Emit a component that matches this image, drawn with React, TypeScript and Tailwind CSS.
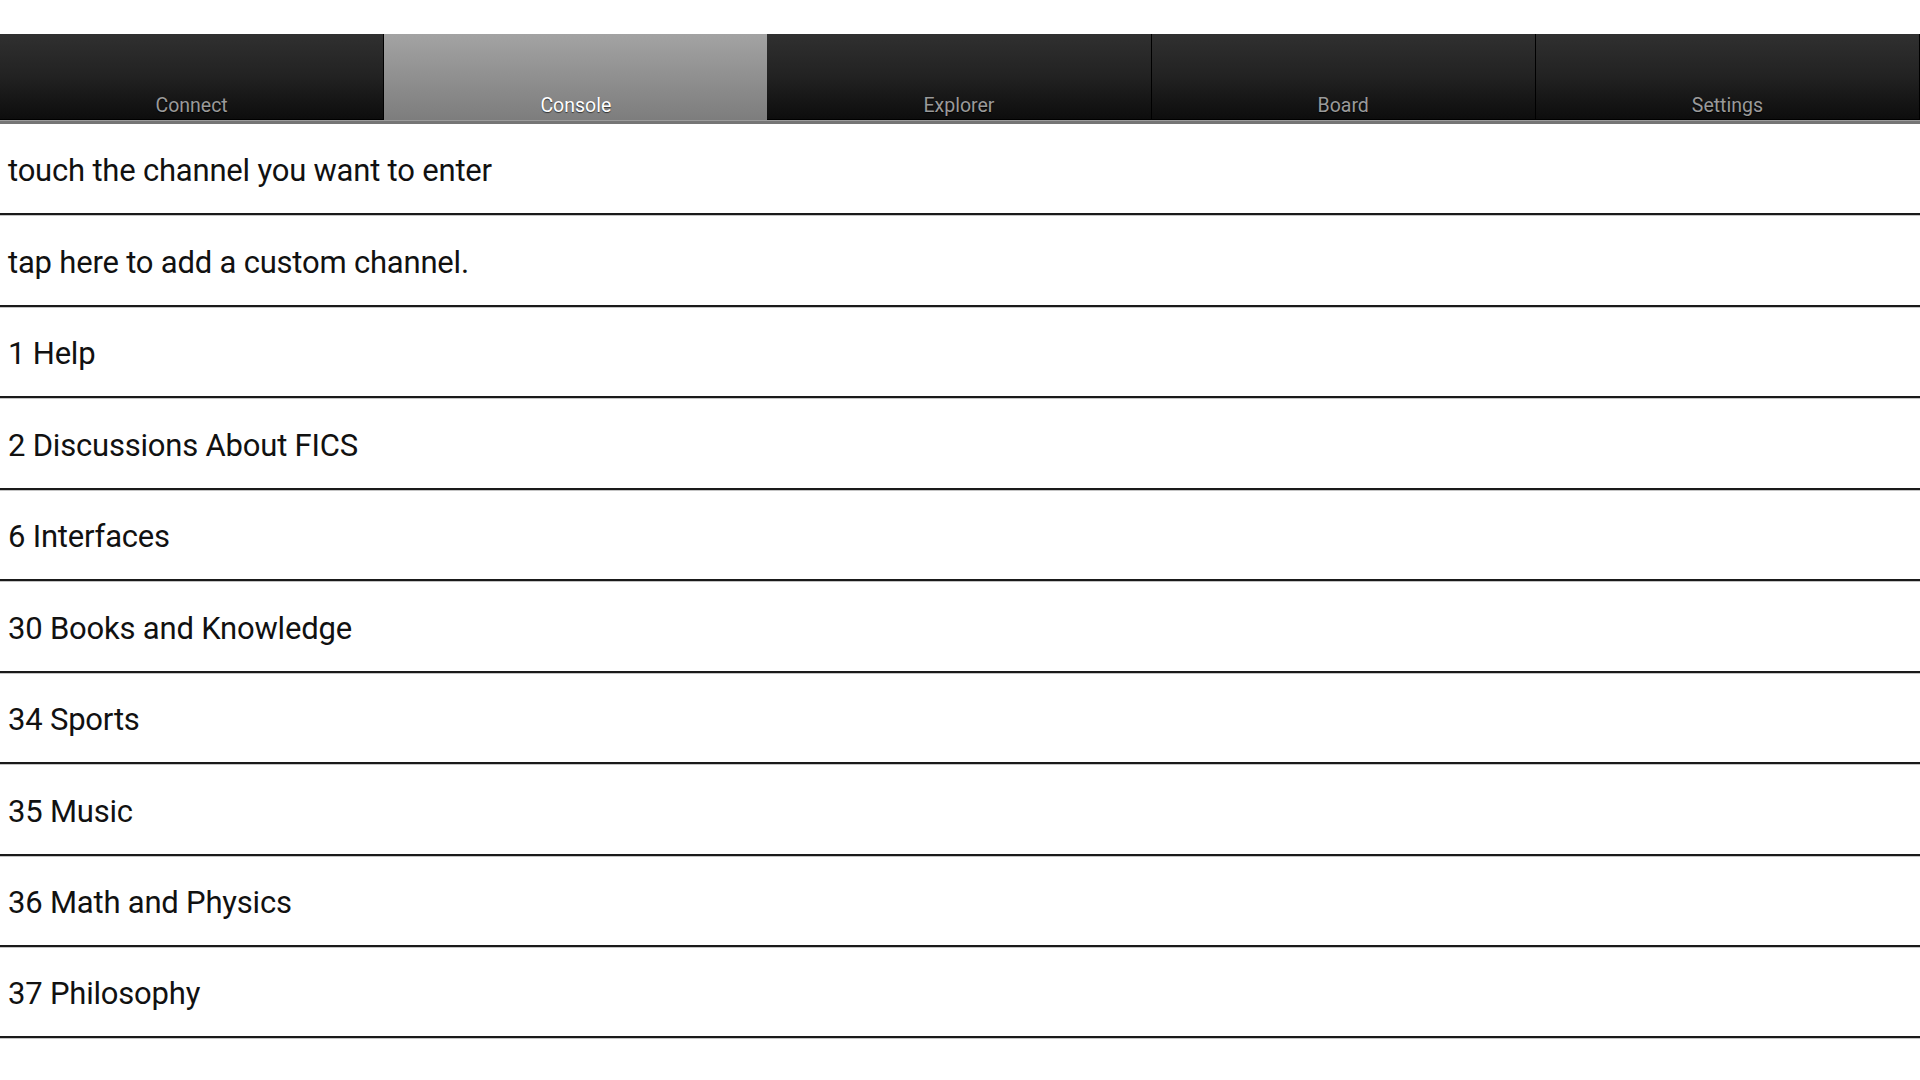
const tabs = ['Connect', 'Console', 'Explorer', 'Board', 'Settings']
const active = 'Console'

const rows = [
  'touch the channel you want to enter',
  'tap here to add a custom channel.',
  '1 Help',
  '2 Discussions About FICS',
  '6 Interfaces',
  '30 Books and Knowledge',
  '34 Sports',
  '35 Music',
  '36 Math and Physics',
  '37 Philosophy',
]

export default function App() {
  return (
    <div className="min-h-screen w-[1920px] bg-white font-['Roboto','Liberation_Sans',sans-serif]">
      {/* status bar gap */}
      <div className="h-[34px] bg-white" />

      {/* tab bar */}
      <div className="flex h-[86px] bg-black">
        {tabs.map((t, i) => {
          const on = t === active
          return (
            <div
              key={t}
              className={
                on
                  ? 'flex flex-1 items-end justify-center bg-gradient-to-b from-[#a3a3a3] to-[#7d7d7d] pb-[5px] text-[19.5px] leading-none text-white [text-shadow:0_1px_1px_rgba(0,0,0,0.6)]'
                  : 'flex flex-1 items-end justify-center border-r border-b border-black bg-gradient-to-b from-[#303030] via-[#222] to-[#0d0d0d] pb-[4px] text-[19.5px] leading-none text-[#9a9a9a] [text-shadow:0_1px_1px_rgba(0,0,0,0.9)]' +
                    (i < tabs.length - 1 && tabs[i + 1] !== active ? ' shadow-[1px_0_0_#3a3a3a]' : '')
              }
            >
              {t}
            </div>
          )
        })}
      </div>
      <div className="h-px bg-[#9c9c9c]" />
      <div className="h-[3px] bg-[#767676]" />

      {/* channel list */}
      <div className="flex flex-col">
        {rows.map((r) => (
          <div
            key={r}
            className="flex h-[91.44px] items-center border-b-2 border-[#1a1a1a] pl-[8px] pt-[6px] text-[31px] tracking-[-0.2px] text-[#111] shadow-[0_1px_0_#c4c4c4]"
          >
            {r}
          </div>
        ))}
      </div>
    </div>
  )
}
